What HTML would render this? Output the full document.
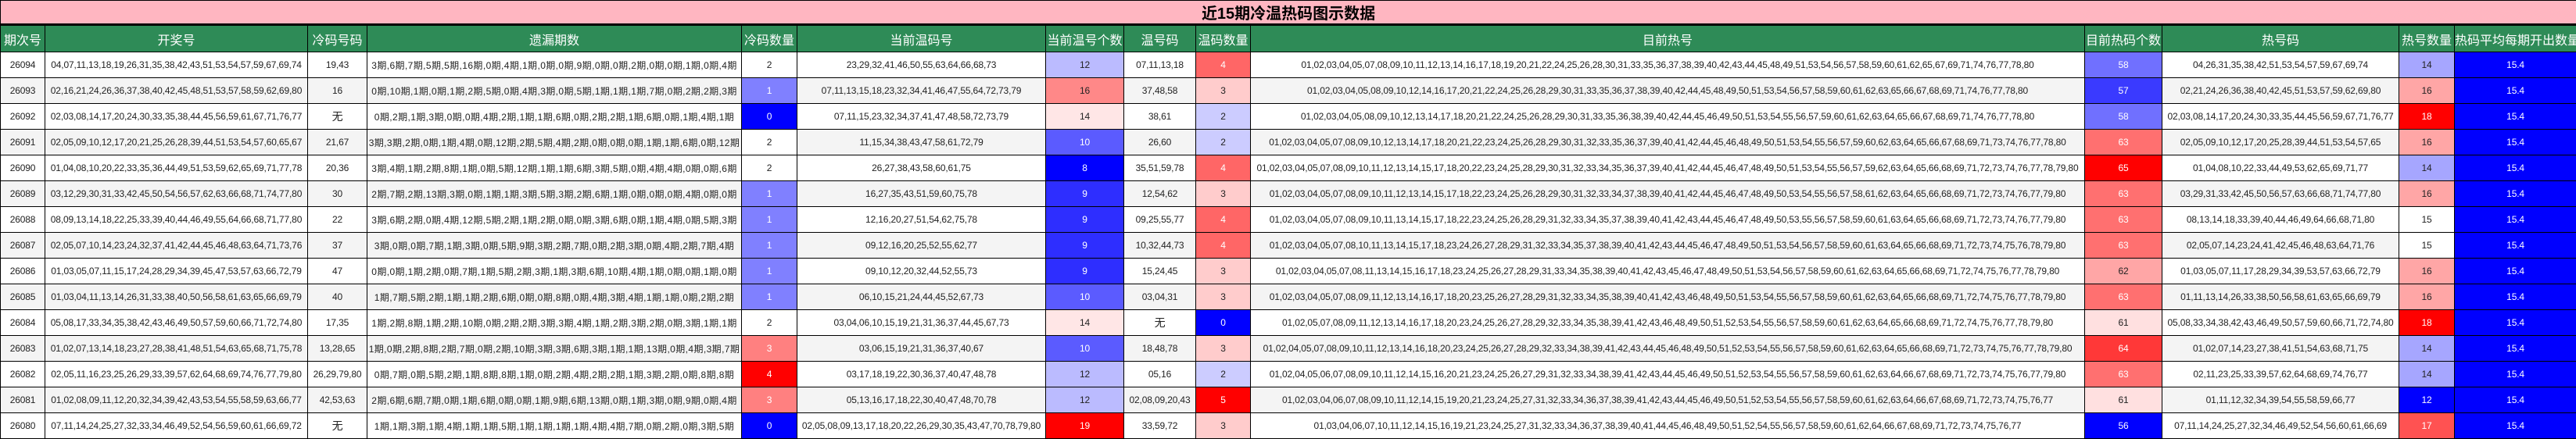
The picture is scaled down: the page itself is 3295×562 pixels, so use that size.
<!DOCTYPE html>
<html><head><meta charset="utf-8">
<style>
html,body{margin:0;padding:0;background:#fff;}
body{width:3295px;height:558px;overflow:hidden;}
table{border-collapse:collapse;table-layout:fixed;width:3295px;font-family:"Liberation Sans","Noto Sans CJK SC",sans-serif;font-size:12px;letter-spacing:-0.15px;color:#222;}
td,th{border:1px solid #000;padding:0;text-align:center;white-space:nowrap;overflow:hidden;}
.t td{background:#FFB6C1;height:25px;font-size:20px;font-weight:bold;color:#000;border-bottom:3px solid #000;letter-spacing:0;}
.h th{background:#2E8B57;color:#fff;font-weight:normal;font-size:16px;height:33px;letter-spacing:0;}
.r td{height:32px;}
.r:nth-child(odd) td{background:#fff;}
.r:nth-child(even) td{background:#F4F4F4;}
.r td.w{background:#fff;}
.r td.yl{letter-spacing:0.4px;}
.r td.cn{font-size:14px;}
.r td.c{color:#fff;}
</style></head><body>
<table>
<colgroup>
<col style="width:57px"><col style="width:336px"><col style="width:76px"><col style="width:479px"><col style="width:71px"><col style="width:318px"><col style="width:100px"><col style="width:92px"><col style="width:70px"><col style="width:1067px"><col style="width:99px"><col style="width:303px"><col style="width:71px"><col style="width:156px">
</colgroup>
<tr class="t"><td colspan="14">近15期冷温热码图示数据</td></tr>
<tr class="h"><th>期次号</th><th>开奖号</th><th>冷码号码</th><th>遗漏期数</th><th>冷码数量</th><th>当前温码号</th><th>当前温号个数</th><th>温号码</th><th>温码数量</th><th>目前热号</th><th>目前热码个数</th><th>热号码</th><th>热号数量</th><th>热码平均每期开出数量</th></tr>

<tr class="r"><td>26094</td><td>04,07,11,13,18,19,26,31,35,38,42,43,51,53,54,57,59,67,69,74</td><td>19,43</td><td class="yl">3期,6期,7期,5期,5期,16期,0期,4期,1期,0期,0期,9期,0期,0期,2期,0期,0期,1期,0期,4期</td><td class="w">2</td><td>23,29,32,41,46,50,55,63,64,66,68,73</td><td style="background:#BBBBFF">12</td><td>07,11,13,18</td><td class="c" style="background:#FF6666">4</td><td>01,02,03,04,05,07,08,09,10,11,12,13,14,16,17,18,19,20,21,22,24,25,26,28,30,31,33,35,36,37,38,39,40,42,43,44,45,48,49,51,53,54,56,57,58,59,60,61,62,65,67,69,71,74,76,77,78,80</td><td class="c" style="background:#7070FF">58</td><td>04,26,31,35,38,42,51,53,54,57,59,67,69,74</td><td style="background:#A6A6FF">14</td><td class="c" style="background:#0000FF">15.4</td></tr>

<tr class="r"><td>26093</td><td>02,16,21,24,26,36,37,38,40,42,45,48,51,53,57,58,59,62,69,80</td><td>16</td><td class="yl">0期,10期,1期,0期,1期,2期,5期,0期,4期,3期,0期,5期,1期,1期,1期,7期,0期,2期,2期,3期</td><td class="c" style="background:#8080FF">1</td><td>07,11,13,15,18,23,32,34,41,46,47,55,64,72,73,79</td><td style="background:#FF8888">16</td><td>37,48,58</td><td style="background:#FFCCCC">3</td><td>01,02,03,04,05,08,09,10,12,14,16,17,20,21,22,24,25,26,28,29,30,31,33,35,36,37,38,39,40,42,44,45,48,49,50,51,53,54,56,57,58,59,60,61,62,63,65,66,67,68,69,71,74,76,77,78,80</td><td class="c" style="background:#3A3AFF">57</td><td>02,21,24,26,36,38,40,42,45,51,53,57,59,62,69,80</td><td style="background:#FFA6A6">16</td><td class="c" style="background:#0000FF">15.4</td></tr>

<tr class="r"><td>26092</td><td>02,03,08,14,17,20,24,30,33,35,38,44,45,56,59,61,67,71,76,77</td><td class="cn">无</td><td class="yl">0期,2期,1期,3期,0期,0期,4期,2期,1期,1期,6期,0期,2期,2期,1期,6期,0期,1期,4期,1期</td><td class="c" style="background:#0000FF">0</td><td>07,11,15,23,32,34,37,41,47,48,58,72,73,79</td><td style="background:#FFE6E6">14</td><td>38,61</td><td style="background:#CCCCFF">2</td><td>01,02,03,04,05,08,09,10,12,13,14,17,18,20,21,22,24,25,26,28,29,30,31,33,35,36,38,39,40,42,44,45,46,49,50,51,53,54,55,56,57,59,60,61,62,63,64,65,66,67,68,69,71,74,76,77,78,80</td><td class="c" style="background:#7070FF">58</td><td>02,03,08,14,17,20,24,30,33,35,44,45,56,59,67,71,76,77</td><td class="c" style="background:#FF0000">18</td><td class="c" style="background:#0000FF">15.4</td></tr>

<tr class="r"><td>26091</td><td>02,05,09,10,12,17,20,21,25,26,28,39,44,51,53,54,57,60,65,67</td><td>21,67</td><td class="yl">3期,3期,2期,0期,1期,4期,0期,12期,2期,5期,4期,2期,0期,0期,0期,1期,1期,6期,0期,12期</td><td class="w">2</td><td>11,15,34,38,43,47,58,61,72,79</td><td class="c" style="background:#5B5BFF">10</td><td>26,60</td><td style="background:#CCCCFF">2</td><td>01,02,03,04,05,07,08,09,10,12,13,14,17,18,20,21,22,23,24,25,26,28,29,30,31,32,33,35,36,37,39,40,41,42,44,45,46,48,49,50,51,53,54,55,56,57,59,60,62,63,64,65,66,67,68,69,71,73,74,76,77,78,80</td><td class="c" style="background:#FF7070">63</td><td>02,05,09,10,12,17,20,25,28,39,44,51,53,54,57,65</td><td style="background:#FFA6A6">16</td><td class="c" style="background:#0000FF">15.4</td></tr>

<tr class="r"><td>26090</td><td>01,04,08,10,20,22,33,35,36,44,49,51,53,59,62,65,69,71,77,78</td><td>20,36</td><td class="yl">3期,4期,1期,2期,8期,1期,0期,5期,12期,1期,1期,6期,3期,5期,0期,4期,4期,0期,0期,6期</td><td class="w">2</td><td>26,27,38,43,58,60,61,75</td><td class="c" style="background:#0000FF">8</td><td>35,51,59,78</td><td class="c" style="background:#FF6666">4</td><td>01,02,03,04,05,07,08,09,10,11,12,13,14,15,17,18,20,22,23,24,25,28,29,30,31,32,33,34,35,36,37,39,40,41,42,44,45,46,47,48,49,50,51,53,54,55,56,57,59,62,63,64,65,66,68,69,71,72,73,74,76,77,78,79,80</td><td class="c" style="background:#FF0000">65</td><td>01,04,08,10,22,33,44,49,53,62,65,69,71,77</td><td style="background:#A6A6FF">14</td><td class="c" style="background:#0000FF">15.4</td></tr>

<tr class="r"><td>26089</td><td>03,12,29,30,31,33,42,45,50,54,56,57,62,63,66,68,71,74,77,80</td><td>30</td><td class="yl">2期,7期,2期,13期,3期,0期,1期,1期,3期,5期,3期,2期,6期,1期,0期,0期,0期,4期,0期,0期</td><td class="c" style="background:#8080FF">1</td><td>16,27,35,43,51,59,60,75,78</td><td class="c" style="background:#2E2EFF">9</td><td>12,54,62</td><td style="background:#FFCCCC">3</td><td>01,02,03,04,05,07,08,09,10,11,12,13,14,15,17,18,22,23,24,25,26,28,29,30,31,32,33,34,37,38,39,40,41,42,44,45,46,47,48,49,50,53,54,55,56,57,58,61,62,63,64,65,66,68,69,71,72,73,74,76,77,79,80</td><td class="c" style="background:#FF7070">63</td><td>03,29,31,33,42,45,50,56,57,63,66,68,71,74,77,80</td><td style="background:#FFA6A6">16</td><td class="c" style="background:#0000FF">15.4</td></tr>

<tr class="r"><td>26088</td><td>08,09,13,14,18,22,25,33,39,40,44,46,49,55,64,66,68,71,77,80</td><td>22</td><td class="yl">3期,6期,2期,0期,4期,12期,5期,2期,1期,2期,0期,0期,3期,6期,0期,1期,4期,0期,5期,3期</td><td class="c" style="background:#8080FF">1</td><td>12,16,20,27,51,54,62,75,78</td><td class="c" style="background:#2E2EFF">9</td><td>09,25,55,77</td><td class="c" style="background:#FF6666">4</td><td>01,02,03,04,05,07,08,09,10,11,13,14,15,17,18,22,23,24,25,26,28,29,31,32,33,34,35,37,38,39,40,41,42,43,44,45,46,47,48,49,50,53,55,56,57,58,59,60,61,63,64,65,66,68,69,71,72,73,74,76,77,79,80</td><td class="c" style="background:#FF7070">63</td><td>08,13,14,18,33,39,40,44,46,49,64,66,68,71,80</td><td class="w">15</td><td class="c" style="background:#0000FF">15.4</td></tr>

<tr class="r"><td>26087</td><td>02,05,07,10,14,23,24,32,37,41,42,44,45,46,48,63,64,71,73,76</td><td>37</td><td class="yl">3期,0期,0期,7期,1期,3期,0期,5期,9期,3期,2期,7期,0期,2期,3期,0期,4期,2期,7期,4期</td><td class="c" style="background:#8080FF">1</td><td>09,12,16,20,25,52,55,62,77</td><td class="c" style="background:#2E2EFF">9</td><td>10,32,44,73</td><td class="c" style="background:#FF6666">4</td><td>01,02,03,04,05,07,08,10,11,13,14,15,17,18,23,24,26,27,28,29,31,32,33,34,35,37,38,39,40,41,42,43,44,45,46,47,48,49,50,51,53,54,56,57,58,59,60,61,63,64,65,66,68,69,71,72,73,74,75,76,78,79,80</td><td class="c" style="background:#FF7070">63</td><td>02,05,07,14,23,24,41,42,45,46,48,63,64,71,76</td><td class="w">15</td><td class="c" style="background:#0000FF">15.4</td></tr>

<tr class="r"><td>26086</td><td>01,03,05,07,11,15,17,24,28,29,34,39,45,47,53,57,63,66,72,79</td><td>47</td><td class="yl">0期,0期,1期,2期,0期,7期,1期,5期,2期,3期,1期,3期,6期,10期,4期,1期,0期,0期,1期,0期</td><td class="c" style="background:#8080FF">1</td><td>09,10,12,20,32,44,52,55,73</td><td class="c" style="background:#2E2EFF">9</td><td>15,24,45</td><td style="background:#FFCCCC">3</td><td>01,02,03,04,05,07,08,11,13,14,15,16,17,18,23,24,25,26,27,28,29,31,33,34,35,38,39,40,41,42,43,45,46,47,48,49,50,51,53,54,56,57,58,59,60,61,62,63,64,65,66,68,69,71,72,74,75,76,77,78,79,80</td><td style="background:#FFA6A6">62</td><td>01,03,05,07,11,17,28,29,34,39,53,57,63,66,72,79</td><td style="background:#FFA6A6">16</td><td class="c" style="background:#0000FF">15.4</td></tr>

<tr class="r"><td>26085</td><td>01,03,04,11,13,14,26,31,33,38,40,50,56,58,61,63,65,66,69,79</td><td>40</td><td class="yl">1期,7期,5期,2期,1期,1期,2期,6期,0期,0期,8期,0期,4期,3期,4期,1期,1期,0期,2期,2期</td><td class="c" style="background:#8080FF">1</td><td>06,10,15,21,24,44,45,52,67,73</td><td class="c" style="background:#5B5BFF">10</td><td>03,04,31</td><td style="background:#FFCCCC">3</td><td>01,02,03,04,05,07,08,09,11,12,13,14,16,17,18,20,23,25,26,27,28,29,31,32,33,34,35,38,39,40,41,42,43,46,48,49,50,51,53,54,55,56,57,58,59,60,61,62,63,64,65,66,68,69,71,72,74,75,76,77,78,79,80</td><td class="c" style="background:#FF7070">63</td><td>01,11,13,14,26,33,38,50,56,58,61,63,65,66,69,79</td><td style="background:#FFA6A6">16</td><td class="c" style="background:#0000FF">15.4</td></tr>

<tr class="r"><td>26084</td><td>05,08,17,33,34,35,38,42,43,46,49,50,57,59,60,66,71,72,74,80</td><td>17,35</td><td class="yl">1期,2期,8期,1期,2期,10期,0期,2期,2期,3期,3期,4期,1期,2期,3期,2期,0期,3期,1期,1期</td><td class="w">2</td><td>03,04,06,10,15,19,21,31,36,37,44,45,67,73</td><td style="background:#FFE6E6">14</td><td class="cn">无</td><td class="c" style="background:#0000FF">0</td><td>01,02,05,07,08,09,11,12,13,14,16,17,18,20,23,24,25,26,27,28,29,32,33,34,35,38,39,41,42,43,46,48,49,50,51,52,53,54,55,56,57,58,59,60,61,62,63,64,65,66,68,69,71,72,74,75,76,77,78,79,80</td><td style="background:#FFE0E0">61</td><td>05,08,33,34,38,42,43,46,49,50,57,59,60,66,71,72,74,80</td><td class="c" style="background:#FF0000">18</td><td class="c" style="background:#0000FF">15.4</td></tr>

<tr class="r"><td>26083</td><td>01,02,07,13,14,18,23,27,28,38,41,48,51,54,63,65,68,71,75,78</td><td>13,28,65</td><td class="yl">1期,0期,2期,8期,2期,7期,0期,2期,10期,3期,3期,6期,3期,1期,1期,13期,0期,4期,3期,7期</td><td class="c" style="background:#FF8080">3</td><td>03,06,15,19,21,31,36,37,40,67</td><td class="c" style="background:#5B5BFF">10</td><td>18,48,78</td><td style="background:#FFCCCC">3</td><td>01,02,04,05,07,08,09,10,11,12,13,14,16,18,20,23,24,25,26,27,28,29,32,33,34,38,39,41,42,43,44,45,46,48,49,50,51,52,53,54,55,56,57,58,59,60,61,62,63,64,65,66,68,69,71,72,73,74,75,76,77,78,79,80</td><td class="c" style="background:#FF3838">64</td><td>01,02,07,14,23,27,38,41,51,54,63,68,71,75</td><td style="background:#A6A6FF">14</td><td class="c" style="background:#0000FF">15.4</td></tr>

<tr class="r"><td>26082</td><td>02,05,11,16,23,25,26,29,33,39,57,62,64,68,69,74,76,77,79,80</td><td>26,29,79,80</td><td class="yl">0期,7期,0期,5期,2期,1期,8期,8期,1期,0期,2期,4期,2期,2期,1期,3期,2期,0期,8期,8期</td><td class="c" style="background:#FF0000">4</td><td>03,17,18,19,22,30,36,37,40,47,48,78</td><td style="background:#BBBBFF">12</td><td>05,16</td><td style="background:#CCCCFF">2</td><td>01,02,04,05,06,07,08,09,10,11,12,14,15,16,20,21,23,24,25,26,27,29,31,32,33,34,38,39,41,42,43,44,45,46,49,50,51,52,53,54,55,56,57,58,59,60,61,62,63,64,66,67,68,69,71,72,73,74,75,76,77,79,80</td><td class="c" style="background:#FF7070">63</td><td>02,11,23,25,33,39,57,62,64,68,69,74,76,77</td><td style="background:#A6A6FF">14</td><td class="c" style="background:#0000FF">15.4</td></tr>

<tr class="r"><td>26081</td><td>01,02,08,09,11,12,20,32,34,39,42,43,53,54,55,58,59,63,66,77</td><td>42,53,63</td><td class="yl">2期,6期,6期,7期,0期,1期,6期,0期,0期,1期,9期,6期,13期,0期,1期,3期,0期,9期,0期,4期</td><td class="c" style="background:#FF8080">3</td><td>05,13,16,17,18,22,30,40,47,48,70,78</td><td style="background:#BBBBFF">12</td><td>02,08,09,20,43</td><td class="c" style="background:#FF0000">5</td><td>01,02,03,04,06,07,08,09,10,11,12,14,15,19,20,21,23,24,25,27,31,32,33,34,36,37,38,39,41,42,43,44,45,46,49,50,51,52,53,54,55,56,57,58,59,60,61,62,63,64,66,67,68,69,71,72,73,74,75,76,77</td><td style="background:#FFE0E0">61</td><td>01,11,12,32,34,39,54,55,58,59,66,77</td><td class="c" style="background:#0000FF">12</td><td class="c" style="background:#0000FF">15.4</td></tr>

<tr class="r"><td>26080</td><td>07,11,14,24,25,27,32,33,34,46,49,52,54,56,59,60,61,66,69,72</td><td class="cn">无</td><td class="yl">1期,1期,3期,1期,4期,1期,1期,5期,1期,1期,1期,1期,4期,4期,7期,0期,2期,0期,3期,5期</td><td class="c" style="background:#0000FF">0</td><td>02,05,08,09,13,17,18,20,22,26,29,30,35,43,47,70,78,79,80</td><td class="c" style="background:#FF0000">19</td><td>33,59,72</td><td style="background:#FFCCCC">3</td><td>01,03,04,06,07,10,11,12,14,15,16,19,21,23,24,25,27,31,32,33,34,36,37,38,39,40,41,44,45,46,48,49,50,51,52,54,55,56,57,58,59,60,61,62,64,66,67,68,69,71,72,73,74,75,76,77</td><td class="c" style="background:#0000FF">56</td><td>07,11,14,24,25,27,32,34,46,49,52,54,56,60,61,66,69</td><td class="c" style="background:#FF5252">17</td><td class="c" style="background:#0000FF">15.4</td></tr>
</table>
</body></html>
